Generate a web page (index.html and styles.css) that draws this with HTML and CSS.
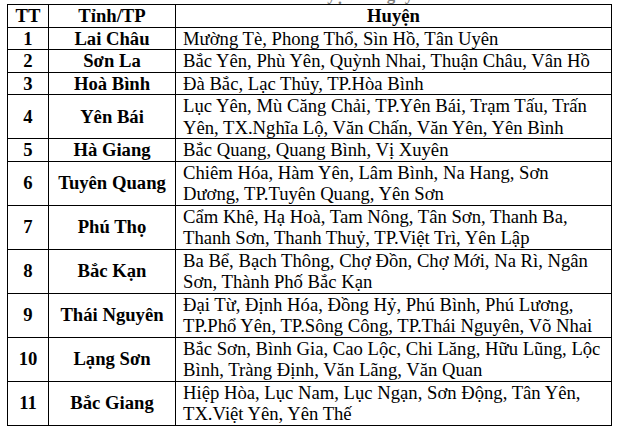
FILE: index.html
```html
<!DOCTYPE html>
<html lang="vi">
<head>
<meta charset="utf-8">
<link rel="stylesheet" href="styles.css">
</head>
<body>
<div class="caption"><span>Danh sách huyện có nguy cơ</span></div>
<table class="grid">
  <colgroup>
    <col class="c-tt">
    <col class="c-tinh">
    <col class="c-huyen">
  </colgroup>
  <thead>
    <tr><th>TT</th><th>Tỉnh/TP</th><th>Huyện</th></tr>
  </thead>
  <tbody>
    <tr><td class="num">1</td><td class="prov">Lai Châu</td><td class="dist">Mường Tè, Phong Thổ, Sìn Hồ, Tân Uyên</td></tr>
    <tr><td class="num">2</td><td class="prov">Sơn La</td><td class="dist">Bắc Yên, Phù Yên, Quỳnh Nhai, Thuận Châu, Vân Hồ</td></tr>
    <tr><td class="num">3</td><td class="prov">Hoà Bình</td><td class="dist">Đà Bắc, Lạc Thủy, TP.Hòa Bình</td></tr>
    <tr><td class="num">4</td><td class="prov">Yên Bái</td><td class="dist">Lục Yên, Mù Căng Chải, TP.Yên Bái, Trạm Tấu, Trấn Yên, TX.Nghĩa Lộ, Văn Chấn, Văn Yên, Yên Bình</td></tr>
    <tr><td class="num">5</td><td class="prov">Hà Giang</td><td class="dist">Bắc Quang, Quang Bình, Vị Xuyên</td></tr>
    <tr><td class="num">6</td><td class="prov">Tuyên Quang</td><td class="dist">Chiêm Hóa, Hàm Yên, Lâm Bình, Na Hang, Sơn Dương, TP.Tuyên Quang, Yên Sơn</td></tr>
    <tr><td class="num">7</td><td class="prov">Phú Thọ</td><td class="dist">Cẩm Khê, Hạ Hoà, Tam Nông, Tân Sơn, Thanh Ba, Thanh Sơn, Thanh Thuỷ, TP.Việt Trì, Yên Lập</td></tr>
    <tr><td class="num">8</td><td class="prov">Bắc Kạn</td><td class="dist">Ba Bể, Bạch Thông, Chợ Đồn, Chợ Mới, Na Rì, Ngân Sơn, Thành Phố Bắc Kạn</td></tr>
    <tr><td class="num">9</td><td class="prov">Thái Nguyên</td><td class="dist">Đại Từ, Định Hóa, Đồng Hỷ, Phú Bình, Phú Lương, TP.Phổ Yên, TP.Sông Công, TP.Thái Nguyên, Võ Nhai</td></tr>
    <tr><td class="num">10</td><td class="prov">Lạng Sơn</td><td class="dist">Bắc Sơn, Bình Gia, Cao Lộc, Chi Lăng, Hữu Lũng, Lộc Bình, Tràng Định, Văn Lãng, Văn Quan</td></tr>
    <tr><td class="num">11</td><td class="prov">Bắc Giang</td><td class="dist">Hiệp Hòa, Lục Nam, Lục Ngạn, Sơn Động, Tân Yên, TX.Việt Yên, Yên Thế</td></tr>
  </tbody>
</table>
</body>
</html>
```

FILE: styles.css
```css
html, body {
  margin: 0;
  padding: 0;
  background: #ffffff;
}
body {
  font-family: "Liberation Serif", "Times New Roman", serif;
  color: #000000;
  font-size: 18.67px;
}
.caption {
  height: 4px;
  overflow: hidden;
  display: flex;
  align-items: flex-end;
  padding-left: 228px;
}
.caption span {
  font-weight: bold;
  font-size: 17px;
  line-height: 20px;
  white-space: nowrap;
  margin-bottom: -1px;
  opacity: 0.5;
}
.grid {
  margin-left: 7px;
  border-collapse: collapse;
  table-layout: fixed;
  width: 604px;
}
.c-tt { width: 41px; }
.c-tinh { width: 127px; }
.c-huyen { width: 436px; }
.grid th, .grid td {
  border: 1px solid #000000;
  padding: 0;
  line-height: 21.5px;
  vertical-align: middle;
}
.grid th {
  font-weight: bold;
  text-align: center;
}
.grid td.num, .grid td.prov {
  font-weight: bold;
  text-align: center;
}
.grid td.dist {
  text-align: left;
  padding: 0 5px 0 7px;
}
```
